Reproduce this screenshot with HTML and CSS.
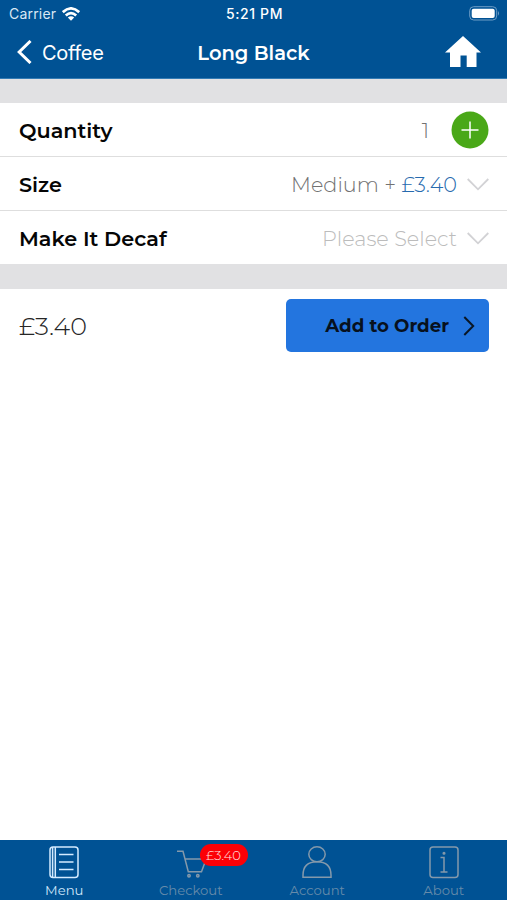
FILE: index.html
```html
<!DOCTYPE html>
<html lang="en">
<head>
<meta charset="utf-8">
<title>Long Black</title>
<link rel="stylesheet" href="styles.css">
</head>
<body>
<div class="app">
  <header class="header">
    <div class="status">
      <div class="carrier"><span class="carrier-name">Carrier</span>
        <svg class="wifi" width="18" height="14" viewBox="0 0 18 14" fill="none" stroke="#fff" stroke-width="2.7"><path d="M.8 5.2Q9-2.4 17.2 5.2M3.8 8.6Q9 3.8 14.2 8.6"/><path d="M9 13.8 5.8 10.6Q9 8 12.2 10.6Z" fill="#fff" stroke="none"/></svg>
      </div>
      <time class="time">5:21 PM</time>
      <svg class="battery" width="31" height="15" viewBox="0 0 31 15"><rect x=".7" y=".7" width="27" height="13.3" rx="4" fill="none" stroke="#6e9dc5"/><rect x="2.7" y="2.7" width="23" height="9.3" rx="2" fill="#fff"/><path d="M29 5Q31 7.3 29 9.7Z" fill="#6e9dc5"/></svg>
    </div>
    <nav class="nav">
      <a class="back"><svg width="15" height="24" viewBox="0 0 15 24" fill="none" stroke="#fff" stroke-width="3"><path d="M13.5 1 2.2 12 13.5 23"/></svg><span class="back-label">Coffee</span></a>
      <h1 class="title">Long Black</h1>
      <svg class="home" width="36" height="32" viewBox="0 0 36 32" fill="#fff"><path d="M18 0 36 16.5H31.5V31H21.7V19.5H15.5V31H5V16.5H0Z"/></svg>
    </nav>
  </header>
  <main class="main">
    <section class="options">
      <div class="row"><span class="label">Quantity</span><span class="value count">1</span>
        <svg class="plus" width="38" height="38" viewBox="0 0 38 38"><circle cx="19" cy="19" r="18.5" fill="#4aa818"/><path d="M10.5 19h17M19 10.5v17" stroke="#fff" stroke-width="1.5"/></svg></div>
      <div class="row"><span class="label">Size</span><span class="value medium">Medium + <span class="price">£3.40</span></span>
        <svg class="chevron" width="22" height="13" viewBox="0 0 22 13"><path d="M.7 1 11 11.3 21.3 1"/></svg></div>
      <div class="row"><span class="label">Make It Decaf</span><span class="value select">Please Select</span>
        <svg class="chevron" width="22" height="13" viewBox="0 0 22 13"><path d="M.7 1 11 11.3 21.3 1"/></svg></div>
    </section>
    <section class="summary">
      <span class="total">£3.40</span>
      <button class="add"><span class="add-label">Add to Order</span><svg width="12" height="20" viewBox="0 0 12 20" fill="none" stroke="#0a1726" stroke-width="2"><path d="M1.3 1 10.2 10 1.3 19"/></svg></button>
    </section>
  </main>
  <footer class="tabs">
    <a class="tab active"><svg class="icon" width="30" height="33" viewBox="0 0 30 33"><rect x="1" y="1" width="28" height="30.5" rx="3"/><path d="M3.6 1v30.5M6.3 1v30.5M10 8.5h14.5M10 16h14.5M10 23.5h14.5"/></svg><span class="tab-name">Menu</span></a>
    <a class="tab"><svg class="icon" width="30" height="33" viewBox="0 0 30 33"><path d="M1 5.3h6l5.3 20.5h13.2L30 13.5M8.8 13H31"/><circle cx="13" cy="29.8" r="1.2"/><circle cx="21.8" cy="29.8" r="1.2"/></svg><span class="badge">£3.40</span><span class="tab-name">Checkout</span></a>
    <a class="tab"><svg class="icon" width="30" height="33" viewBox="0 0 30 33"><ellipse cx="15" cy="8.3" rx="8.2" ry="7.5"/><path d="M1 31.3v-2Q1 15.7 15 15.7T29 29.3v2Z"/></svg><span class="tab-name">Account</span></a>
    <a class="tab"><svg class="icon" width="30" height="33" viewBox="0 0 30 33"><rect x="1" y="1" width="28" height="30.5" rx="3"/><path d="M11.5 11.5H15V26M11.5 26h7"/><circle cx="15" cy="7.2" r=".8"/></svg><span class="tab-name">About</span></a>
  </footer>
</div>
</body>
</html>
```
FILE: styles.css
```css
* { box-sizing: border-box; }
body { margin: 0; background: #fff; font-family: Montserrat, Inter, "Liberation Sans", sans-serif; }
svg { display: block; flex: none; }
.app { width: 507px; height: 900px; display: flex; flex-direction: column; overflow: hidden; }
.header { height: 79px; background: #005294; color: #fff; border-bottom: 1px solid #337bb4; }
.status { height: 28px; padding: 0 7px 0 9px; display: grid; grid-template-columns: 1fr auto 1fr; align-items: center; font: 500 13px/28px Inter, sans-serif; }
.carrier { display: flex; align-items: center; gap: 6px; }
.carrier-name { font-size: 14px; font-weight: 400; color: #d9e8f4; letter-spacing: .2px; }
.time { font-weight: 500; font-size: 14px; letter-spacing: .6px; }
.battery { justify-self: end; margin-top: -1px; }
.nav { height: 48px; padding: 1px 17px 0; display: grid; grid-template-columns: 1fr auto 1fr; align-items: center; }
.back { display: flex; align-items: center; gap: 10px; }
.back > svg { margin-top: -1px; }
.back-label { font: 400 20px/28px Inter, sans-serif; letter-spacing: -.3px; }
.title { margin: 0; font-size: 19.5px; font-weight: 600; line-height: 28px; }
.home { justify-self: end; margin: -1px 9px 0 0; }
.main { flex: 1; }
.options { border: solid #e1e1e3; border-width: 24px 0 25px; }
.row { height: 53px; padding: 1px 18px 0 19px; display: flex; align-items: center; }
.row + .row { height: 54px; padding-top: 2px; border-top: 1px solid #dedede; }
.label { flex: 1; color: #050505; font-size: 20.8px; font-weight: 600; }
.value { color: #727272; font-size: 20.8px; font-weight: 300; white-space: nowrap; }
.count { margin-right: 22px; }
.medium, .select { margin-right: 10px; }
.select { color: #bcbcbc; }
.price { color: #276aae; }
.chevron { fill: none; stroke: #d2d2d5; stroke-width: 1.8; }
.summary { height: 73px; padding: 0 18px 0 19px; display: flex; align-items: center; justify-content: space-between; }
.total { color: #262626; font-size: 25.4px; font-weight: 300; }
.add { width: 203px; height: 53px; padding: 1px 14px 0 0; border: 0; border-radius: 5px; background: #2375df; color: #07111e; display: flex; align-items: center; justify-content: flex-end; gap: 14px; font: 700 18.2px/24px Montserrat, Inter, sans-serif; }
.tabs { height: 60px; padding: 6px 0 0 1px; background: #005294; display: grid; grid-template-columns: repeat(4, 126.5px); }
.tab { position: relative; display: flex; flex-direction: column; align-items: center; color: #668baa; }
.active { color: #cfe6fa; }
.icon { fill: none; stroke: #8499ab; stroke-width: 1.5; overflow: visible; }
.active .icon { stroke: #d4ebff; }
.tab-name { margin-top: 3px; font-size: 13.2px; line-height: 17px; font-weight: 400; }
.badge { position: absolute; left: 72px; top: -2px; width: 48px; height: 22px; border-radius: 11px; background: #fc0006; color: #ffe0e0; font-size: 13px; line-height: 22px; font-weight: 300; text-align: center; }
```
